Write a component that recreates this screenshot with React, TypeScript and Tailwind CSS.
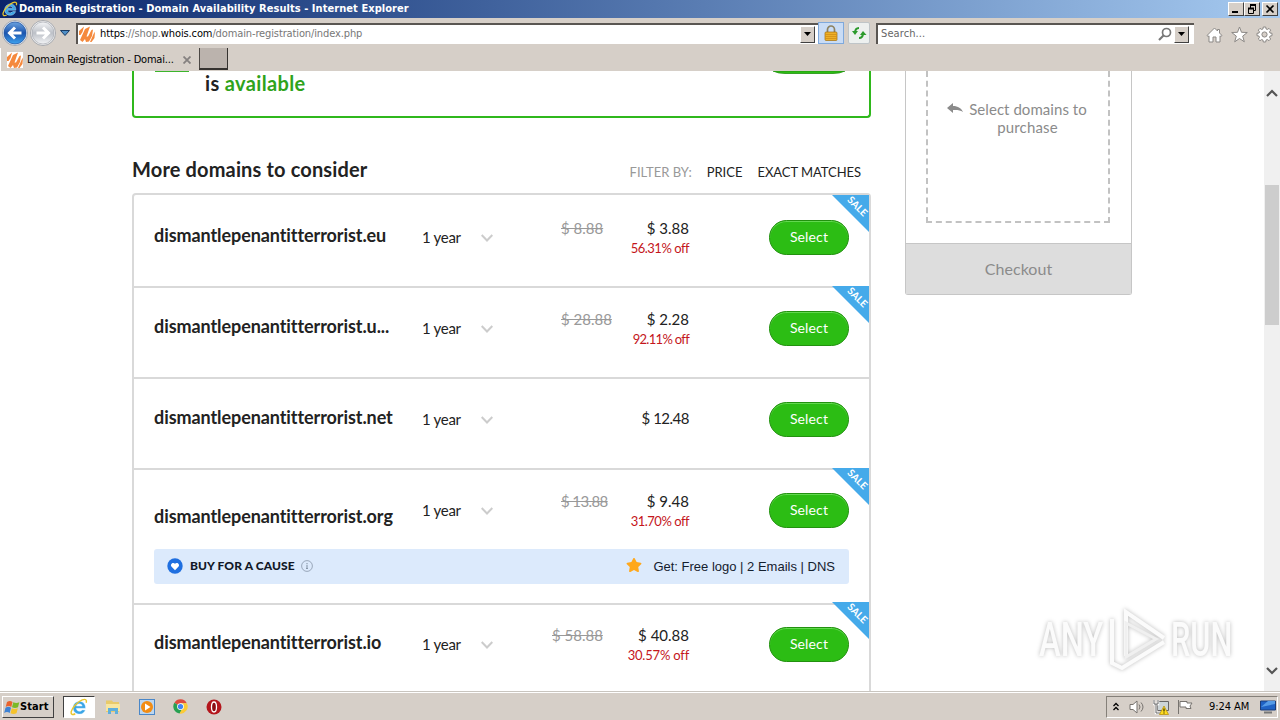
import { ReactNode } from "react";
import { FaStar } from "react-icons/fa";

type Domain = {
  name: string;
  price: string;
  oldPrice?: string;
  off?: string;
  offTracking?: string;
  cause?: boolean;
  last?: boolean;
};

const domains: Domain[] = [
  { name: "dismantlepenantitterrorist.eu", price: "$ 3.88", oldPrice: "$ 8.88", off: "56.31% off", offTracking: "tracking-[-0.5px]" },
  { name: "dismantlepenantitterrorist.u...", price: "$ 2.28", oldPrice: "$ 28.88", off: "92.11% off", offTracking: "tracking-[-0.7px]" },
  { name: "dismantlepenantitterrorist.net", price: "$ 12.48" },
  { name: "dismantlepenantitterrorist.org", price: "$ 9.48", oldPrice: "$ 13.88", off: "31.70% off", offTracking: "tracking-[-0.5px]", cause: true },
  { name: "dismantlepenantitterrorist.io", price: "$ 40.88", oldPrice: "$ 58.88", off: "30.57% off", offTracking: "tracking-[-0.2px]", last: true },
];

const raised = "border border-t-white border-l-white border-r-[#404040] border-b-[#404040] bg-[#d6cfc8]";

function IeLogo({ className }: { className: string }) {
  return (
    <svg viewBox="0 0 16 16" className={className}>
      <path d="M13.8 9.2H5.6c.2 1.8 1.3 2.6 2.8 2.6 1.1 0 1.9-.4 2.3-1.2h2.9c-.8 2.4-2.7 3.7-5.2 3.7-3.4 0-5.7-2.2-5.7-5.6 0-3.300 2.400-5.700 5.700-5.700 3.500 0 5.600 2.500 5.400 6.200zM5.700 7.200h5.100C10.600 5.900 9.700 5.200 8.300 5.200S5.900 5.900 5.700 7.200z" fill="#3ba5e6" stroke="#d9f1ff" strokeWidth=".4" />
      <path d="M14.400 4.200c.8-2.600-.6-3.700-3.500-2.500C6.500 3.500 1.600 8.800 1 12.400c-.3 2.300 1.200 2.900 3.700 1.600" fill="none" stroke="#e9c62d" strokeWidth="1.300" />
    </svg>
  );
}

function WhoisLogo() {
  return (
    <svg viewBox="0 0 16 16" className="size-4 shrink-0">
      <rect width="16" height="16" fill="#fff" />
      <path d="M0 5 5 .5 3.500 6 1.500 9 0 9zM1 14 6 3l5-2.500-3.500 10h1.500L12.500 4 14 3.500 13 10l-3 5.500-3 .5-1-3-2.500 3z" fill="#f5893d" />
      <path d="m14.500 8 1.500-2.500-.5 6.500-3 4H11z" fill="#f5893d" />
    </svg>
  );
}

function NavCircle({ back }: { back?: boolean }) {
  return (
    <svg viewBox="0 0 26 26" className="size-[26px] shrink-0">
      <defs>
        <linearGradient id={back ? "navBlue" : "navGray"} x1="0" y1="0" x2="0" y2="1">
          <stop offset="0" stopColor={back ? "#6ba3e0" : "#f4f5f7"} />
          <stop offset=".5" stopColor={back ? "#1c55ae" : "#bcc0c7"} />
          <stop offset="1" stopColor={back ? "#3fa4f0" : "#f3f4f6"} />
        </linearGradient>
      </defs>
      <circle cx="13" cy="13" r="12.500" fill={back ? "#e8eef6" : "#f4f4f4"} stroke="#8a8f99" strokeWidth=".7" />
      <circle cx="13" cy="13" r="11" fill={back ? "url(#navBlue)" : "url(#navGray)"} stroke={back ? "#1c4f9e" : "#a8abb1"} strokeWidth=".7" />
      <path
        d={back ? "M19.500 13H8M13 7.500 7.500 13l5.500 5.500" : "M6.500 13H18M13 7.500l5.500 5.500-5.500 5.500"}
        fill="none"
        stroke="#fff"
        strokeWidth="3"
      />
    </svg>
  );
}

function DropButton() {
  return (
    <span className={`flex h-[17px] w-[15px] shrink-0 items-center justify-center ${raised}`}>
      <svg viewBox="0 0 7 4" className="h-1 w-[7px]"><path d="M0 0h7L3.500 4z" fill="#000" /></svg>
    </span>
  );
}

function TitleButton({ children, className = "" }: { children: ReactNode; className?: string }) {
  return (
    <span className={`flex h-[14px] w-4 items-center justify-center ${raised} ${className}`}>
      <svg viewBox="0 0 10 10" className="size-[10px]" fill="none" stroke="#000">{children}</svg>
    </span>
  );
}

function TitleBar() {
  return (
    <div className="flex h-[18px] items-center bg-linear-to-r from-[#0a246a] to-[#a6caf0] pr-[2px] pl-[2px]">
      <IeLogo className="size-4" />
      <span className="ml-px flex-1 pt-px text-[11px] font-bold tracking-[0.06px] text-white">
        Domain Registration - Domain Availability Results - Internet Explorer
      </span>
      <TitleButton><path d="M1 8h6" strokeWidth="2" /></TitleButton>
      <TitleButton>
        <path d="M3 1h6M1 4.500h6" strokeWidth="2" />
        <path d="M3.500 1v3M8.500 1v5.500H7M1.500 4v5.500h5V4" />
      </TitleButton>
      <TitleButton className="ml-[2px]"><path d="m1.500 1.500 7 7m0-7-7 7" strokeWidth="1.700" /></TitleButton>
    </div>
  );
}

function AddressRow() {
  return (
    <div className="flex h-[30px] items-center pl-[2px]">
      <NavCircle back />
      <span className="ml-[2px]"><NavCircle /></span>
      <svg viewBox="0 0 10 6" className="ml-1 h-[6px] w-[10px]"><path d="M.5.5h9L5 5.500z" fill="#4f8fc6" stroke="#173a63" /></svg>
      <div className="ml-[6px] flex h-[21px] w-[742px] items-center border-t-2 border-l-2 border-[#5a5652] bg-white pr-[3px] pl-px">
        <WhoisLogo />
        <span className="ml-[5px] flex-1 pt-px text-[11px] tracking-[-0.12px] text-[#777]">
          <span className="text-black">https</span>://shop.<span className="text-black">whois.com</span>/domain-registration/index.php
        </span>
        <DropButton />
      </div>
      <span className="flex h-[22px] w-[26px] items-center justify-center border border-[#7fa9dc] bg-[#c9dcf5]">
        <svg viewBox="0 0 14 16" className="h-4 w-[14px]">
          <path d="M3.500 8V4.500a3.500 3.500 0 0 1 7 0V8" fill="none" stroke="#8c8160" strokeWidth="1.700" />
          <rect x="1" y="7" width="12" height="8.500" rx="1" fill="#eeb027" stroke="#a36e0c" strokeWidth=".7" />
          <path d="M1.500 9.500h11M1.500 11.500h11M1.500 13.500h11" stroke="#c78310" strokeWidth=".6" />
        </svg>
      </span>
      <span className="ml-1 flex size-[22px] items-center justify-center rounded-xs border border-[#bfc5c8] bg-[#edf0ef]">
        <svg viewBox="0 0 16 14" className="h-[14px] w-4" fill="none" stroke="#2c9a2c" strokeWidth="2">
          <path d="M8 2Q4 2 4 7" /><path d="M1 5l3 4 3-4z" fill="#2c9a2c" stroke="none" />
          <path d="M8 12q4 0 4-5" /><path d="M9 9l3-4 3.500 4z" fill="#2c9a2c" stroke="none" />
        </svg>
      </span>
      <div className="ml-[6px] flex h-[21px] w-[318px] items-center border-t-2 border-l-2 border-[#5a5652] bg-white pr-[5px] pl-[3px]">
        <span className="flex-1 pt-px text-[11px] tracking-[0.1px] text-[#666]">Search...</span>
        <svg viewBox="0 0 14 14" className="mr-[2px] size-[14px]" fill="none" stroke="#777">
          <circle cx="8.500" cy="5.500" r="4" strokeWidth="1.700" /><path d="m5.500 8.500-4.500 4.500" strokeWidth="2.200" />
        </svg>
        <DropButton />
      </div>
      <div className="mt-[3px] ml-3 flex items-center gap-2">
        <svg viewBox="0 0 17 17" className="size-[17px]" fill="#fff" stroke="#8b8885">
          <path d="M1 9.500 8.500 2l3 3V3.500h2V7L16 9.500l-1.200 1L14 9.800V16h-4v-5H7v5H3V9.800l-.8.7z" />
        </svg>
        <svg viewBox="0 0 17 17" className="size-[17px]" fill="#fff" stroke="#8b8885">
          <path d="m8.500 1 2 5.300 5.800.2-4.600 3.600 1.600 5.700-4.800-3.300-4.800 3.300 1.600-5.700L.7 6.500l5.800-.2z" />
        </svg>
        <svg viewBox="0 0 17 17" className="size-[17px]" fill="#fff" stroke="#8b8885">
          <path d="m7.300 1h2.400l.4 2 1.200.5L13 2.400l1.700 1.700L13.500 5.800l.5 1.200 2 .3v2.400l-2 .4-.5 1.200 1.200 1.700-1.700 1.700-1.700-1.200-1.200.5-.4 2H7.300l-.4-2-1.200-.5L4 14.700 2.300 13l1.200-1.700L3 10.100l-2-.4V7.300L3 7l.5-1.200-1.200-1.700L4 2.400l1.700 1.100L6.900 3z" />
          <circle cx="8.500" cy="8.500" r="2.600" fill="#d6cfc8" />
        </svg>
      </div>
    </div>
  );
}

function TabRow() {
  return (
    <div className="flex h-[23px] items-start">
      <div className="flex h-[23px] w-[198px] items-center border-l border-white pl-[6px]">
        <WhoisLogo />
        <span className="ml-[4px] w-[156px] pt-[2px] text-[11px] tracking-[-0.2px] whitespace-nowrap text-black">Domain Registration - Domai...</span>
        <svg viewBox="0 0 8 8" className="size-2" stroke="#858180" strokeWidth="1.800"><path d="m.5.5 7 7m0-7-7 7" /></svg>
      </div>
      <span className="ml-px h-[22px] w-[29px] border-r border-b-2 border-l border-[#35322f] border-l-[#4b4744] bg-[#bbb3ad]" />
    </div>
  );
}

function SaleRibbon({ className }: { className: string }) {
  return (
    <svg viewBox="0 0 37 37" className={`absolute right-0 size-[37px] ${className}`}>
      <path d="M0 0h37v37z" fill="#45aaea" />
      <text x="25" y="14.700" transform="rotate(45 25 12)" textAnchor="middle" fill="#fff" fontSize="10" fontWeight="700" letterSpacing=".05">SALE</text>
    </svg>
  );
}

function CauseBanner() {
  return (
    <div className="mt-[21px] flex h-[35px] w-[695px] items-center rounded-[3px] bg-[#dceafc] pr-[14px] pl-[13px]">
      <svg viewBox="0 0 16 16" className="mb-px size-4">
        <circle cx="8" cy="8" r="7.700" fill="#1f6fe0" />
        <path d="M8 12.300 4.400 8.500C2.800 6.500 5.800 3.800 8 5.800c2.200-2 5.200.7 3.600 2.700z" fill="#fff" />
      </svg>
      <span className="ml-[7px] pb-px text-[12px] font-black tracking-[0.1px] text-[#111827]">BUY FOR A CAUSE</span>
      <svg viewBox="0 0 12 12" className="mb-px ml-[6px] size-3" fill="none" stroke="#8997a9">
        <circle cx="6" cy="6" r="5.400" strokeWidth=".8" /><path d="M6 5v3.500M6 3v1.200M5 8.500h2" strokeWidth="1.100" />
      </svg>
      <FaStar className="mb-[3px] ml-auto size-4 text-[#ffa81c]" />
      <span className="ml-[11px] font-['Liberation_Sans',sans-serif] text-[13px] text-[#14202e]">Get: Free logo | 2 Emails | DNS</span>
    </div>
  );
}

function DomainRow({ domain, first }: { domain: Domain; first: boolean }) {
  const height = domain.cause ? "h-[135px]" : "h-[91px]";
  return (
    <div className={`relative pl-5 ${height} ${first ? "pt-[25px]" : domain.last ? "border-t-2 border-[#d9d9d9] pt-[22px]" : "border-t-2 border-[#d9d9d9] pt-[23px]"}`}>
      <div className="flex h-[35px] items-center">
        <span className={`w-[268px] text-[18px] font-bold tracking-[-0.08px] ${domain.cause ? "pt-[11px]" : "pb-[5px]"}`}>{domain.name}</span>
        <span className="w-[59px] pb-px text-[15px] tracking-[-0.3px]">1 year</span>
        <svg viewBox="0 0 12 8" className="h-2 w-3" fill="none" stroke="#ccc" strokeWidth="2"><path d="m.7 1 5.300 5.500L11.300 1" /></svg>
        <div className={`flex w-[196px] flex-col ${domain.off ? "pt-px" : "pb-[2px]"}`}>
          <div className="flex h-5 items-center justify-between text-[15px]">
            <span className={`text-[#999] line-through ${domain.last ? "ml-[59px]" : "ml-[68px]"} ${domain.cause ? "tracking-[-0.6px]" : ""}`}>{domain.oldPrice}</span>
            <span className={domain.off ? "" : "tracking-[-0.5px]"}>{domain.price}</span>
          </div>
          {domain.off && <span className={`h-5 text-right text-[13px] leading-5 text-[#c4161c] ${domain.offTracking}`}>{domain.off}</span>}
        </div>
        <button className="ml-20 h-[35px] w-20 rounded-full border border-[#22910f] bg-[#2cbd14] pb-[2px] text-[14px] tracking-[0.15px] text-white inset-shadow-[0_1px_0_#62d84f]">Select</button>
      </div>
      {domain.cause && <CauseBanner />}
      {domain.off && <SaleRibbon className={first ? "top-0" : domain.last ? "-top-[3px]" : "-top-[2px]"} />}
    </div>
  );
}

function Results() {
  return (
    <main className="ml-[132px] w-[739px]">
      <div className="flex h-[47px] justify-between rounded-b-[4px] border-2 border-t-0 border-[#2fb81c]">
        <div className="flex">
          <span className="ml-[21px] h-px w-[34px] bg-[#3cb52c]" />
          <p className="ml-4 text-[20px] leading-[25px] font-bold tracking-[0.36px]">is <span className="text-[#2fa31b]">available</span></p>
        </div>
        <svg viewBox="0 0 72 3" className="mr-6 h-[3px] w-[72px]"><path d="M0 0h72q-5 2.500-12 2.500H12Q5 2.500 0 0z" fill="#2cbd14" stroke="#22910f" strokeWidth=".8" /></svg>
      </div>
      <div className="flex h-[75px] items-end justify-between pr-[10px] pb-[12px]">
        <h2 className="text-[20px] leading-6 font-bold tracking-[0.15px]">More domains to consider</h2>
        <div className="flex text-[13px] leading-[18px]">
          <span className="text-[#999]">FILTER BY:</span>
          <span className="ml-[15px]">PRICE</span>
          <span className="ml-[15px] tracking-[-0.05px]">EXACT MATCHES</span>
        </div>
      </div>
      <div className="rounded-t-[4px] border-2 border-b-0 border-[#d9d9d9]">
        {domains.map((domain, i) => <DomainRow key={domain.name} domain={domain} first={i === 0} />)}
      </div>
    </main>
  );
}

function Cart() {
  return (
    <aside className="ml-[34px] h-[224px] w-[227px] rounded-b-[3px] border border-t-0 border-[#c6c6c6]">
      <div className="mx-5 h-[152px] w-[184px] border-2 border-t-0 border-dashed border-[#c2c2c2] pt-[29px] text-center text-[15px] leading-[18px] text-[#8b8b8b]">
        <p className="flex items-center justify-center gap-[6px] pr-[2px] tracking-[0.05px]">
          <svg viewBox="0 0 16 11" className="mb-[2px] h-[11px] w-4" fill="#8b8b8b"><path d="M0 5 6 0v3c5 0 8.500 2.500 10 6-3-2-6-2.300-10-2v3z" /></svg>
          Select domains to
        </p>
        <p className="pl-[19px] tracking-[0.15px]">purchase</p>
      </div>
      <div className="mt-5 flex h-[51px] items-center justify-center border-t border-[#c6c6c6] bg-[#ddd] pb-px text-[16px] tracking-[0.05px] text-[#8b8b8b]">Checkout</div>
    </aside>
  );
}

function ScrollBar() {
  return (
    <div className="ml-auto flex w-4 flex-col items-center bg-[#f0f0f0] pt-[18px] pb-4">
      <svg viewBox="0 0 12 8" className="h-2 w-3" fill="none" stroke="#555" strokeWidth="2.200"><path d="m1 7 5-5 5 5" /></svg>
      <div className="mt-[88px] h-[140px] w-[14px] bg-[#cdcdcd]" />
      <svg viewBox="0 0 12 8" className="mt-auto h-2 w-3" fill="none" stroke="#555" strokeWidth="2.200"><path d="m1 1 5 5 5-5" /></svg>
    </div>
  );
}

function Watermark() {
  return (
    <div className="absolute top-[535px] left-[1039px] flex h-[68px] items-center font-['Roboto',sans-serif] text-[48px] leading-[68px] font-medium text-[#fbfbfb] drop-shadow-[0_0_2px_#bbb]">
      <span className="w-[68px] origin-left scale-x-[0.68] whitespace-nowrap">ANY</span>
      <svg viewBox="0 0 60 66" className="h-[66px] w-[60px]" fill="none" stroke="#fbfbfb" strokeWidth="4">
        <path d="M19 49V5l38 26M5 12v44l10 5 42-26" />
        <path d="M19 16v34l30-18z" stroke="#f0f0f0" strokeWidth="3" />
      </svg>
      <span className="ml-1 w-[68px] origin-left scale-x-[0.64] whitespace-nowrap">RUN</span>
    </div>
  );
}

function Taskbar() {
  return (
    <div className="flex h-[28px] items-center border-t border-white bg-[#d6cfc8] pr-[2px] pl-[2px]">
      <span className={`flex h-[22px] w-[52px] items-center pl-px ${raised}`}>
        <svg viewBox="0 0 16 16" className="size-4">
          <path d="M3 3q3-2 5.500 0L7.300 8Q4.500 6 1.700 8z" fill="#e9632d" />
          <path d="M9.300 3.300q3 1.500 6 0L14 8.300q-3 1.500-6 0z" fill="#7bb928" />
          <path d="M1.500 8.800q3-2 5.500 0L5.700 14Q3 12 .2 14z" fill="#3e82d4" />
          <path d="M7.800 9.200q3 1.500 6 0l-1.300 5q-3 1.500-6 0z" fill="#f5c32c" />
        </svg>
        <span className="pt-[2px] text-[11px] font-bold tracking-[0.1px] text-black">Start</span>
      </span>
      <span className="ml-[9px] flex h-[22px] w-[32px] items-center justify-center border border-t-[#404040] border-r-white border-b-white border-l-[#404040] bg-white">
        <IeLogo className="size-[18px]" />
      </span>
      <svg viewBox="0 0 16 16" className="ml-[10px] size-4">
        <path d="M1 3V1.500h6L8 3h6v10H1z" fill="#e8ca6a" />
        <path d="M1 5h14v7H1z" fill="#f8e69f" />
        <path d="M3 15V9h10v6h-3v-3H6v3z" fill="#5fafdc" />
      </svg>
      <svg viewBox="0 0 16 16" className="ml-[18px] size-4">
        <rect x=".5" y=".5" width="15" height="15" fill="#bcd6ef" stroke="#4a87c8" />
        <circle cx="8" cy="8" r="6" fill="#f28c13" />
        <path d="m6 4.500 5.500 3.500L6 11.500z" fill="#fff" />
      </svg>
      <svg viewBox="0 0 16 16" className="ml-[18px] size-[15px]">
        <path d="M8 8 1.500 4A7.500 7.500 0 0 1 14.700 4.500H8z" fill="#dd4b3e" />
        <path d="m8 8-6.500-4A7.500 7.500 0 0 0 7 15.500l3.500-5z" fill="#28a052" />
        <path d="M8 4.500h6.700A7.500 7.500 0 0 1 7 15.500L11 8z" fill="#fbcb36" />
        <circle cx="8" cy="8" r="3.600" fill="#fff" /><circle cx="8" cy="8" r="2.800" fill="#4285f4" />
      </svg>
      <svg viewBox="0 0 16 16" className="ml-[18px] size-4">
        <circle cx="8" cy="8" r="7.500" fill="#b4161c" />
        <ellipse cx="8" cy="8" rx="2.500" ry="5" fill="#8b0d12" stroke="#fff" strokeWidth="1.300" />
      </svg>
      <div className="ml-auto flex h-[22px] w-[172px] items-center border border-t-[#858079] border-r-white border-b-white border-l-[#858079] pr-px pl-[6px]">
        <svg viewBox="0 0 6 9" className="h-[9px] w-[6px]" fill="none" stroke="#000" strokeWidth="1.300"><path d="m.5 4 2.500-2.500L5.500 4M.5 8 3 5.500 5.500 8" /></svg>
        <svg viewBox="0 0 16 14" className="ml-[10px] h-[14px] w-4" fill="none" stroke="#77736f">
          <path d="M1 4.500h3L8 1v12L4 9.500H1z" fill="#fff" /><path d="M10 4.500q2 2.500 0 5M12 2.500q4 4.500 0 9" />
        </svg>
        <svg viewBox="0 0 16 16" className="ml-2 size-4">
          <path d="M4.500 2.500h11v9h-11z" fill="#cdd5d8" stroke="#666" />
          <path d="M1 1v4h4V1M3 5v9h4" fill="none" stroke="#fff" strokeWidth="2.500" /><path d="M1 1v4h4V1M3 5v9h4" fill="none" stroke="#666" />
          <path d="m11 7 4.500 8.500h-9z" fill="#ffdc1f" stroke="#b38b00" strokeWidth=".7" /><path d="M11 9.500v3m0 1v1" stroke="#000" />
        </svg>
        <svg viewBox="0 0 16 16" className="ml-2 size-4" fill="#fff" stroke="#77736f">
          <path d="M1.500 1v14M3 2.500h7V4h5l-2 3 1 2.500H9V8H3z" />
        </svg>
        <span className="ml-4 flex-1 pt-[2px] text-[11px] tracking-[-0.05px] whitespace-nowrap text-black">9:24 AM</span>
        <svg viewBox="0 0 16 14" className="h-[14px] w-4">
          <path d="M.5 1h15v9H.5z" fill="#1f62c4" stroke="#1b3c78" /><path d="m1 7 7-6h7v3z" fill="#559be6" /><path d="M4 12.500h8" stroke="#777" strokeWidth="2" />
        </svg>
      </div>
    </div>
  );
}

export default function App() {
  return (
    <div className="flex h-[720px] w-[1280px] flex-col overflow-hidden bg-white font-['DejaVu_Sans_Condensed','DejaVu_Sans',sans-serif]">
      <header className="h-[71px] shrink-0 bg-[#d6cfc8]">
        <TitleBar />
        <AddressRow />
        <TabRow />
      </header>
      <div className="relative flex h-[620px] shrink-0 overflow-hidden font-['Lato',sans-serif] text-[#222]">
        <Results />
        <Cart />
        <ScrollBar />
        <Watermark />
      </div>
      <div className="h-px shrink-0 bg-[#c9c5bf]" />
      <Taskbar />
    </div>
  );
}
